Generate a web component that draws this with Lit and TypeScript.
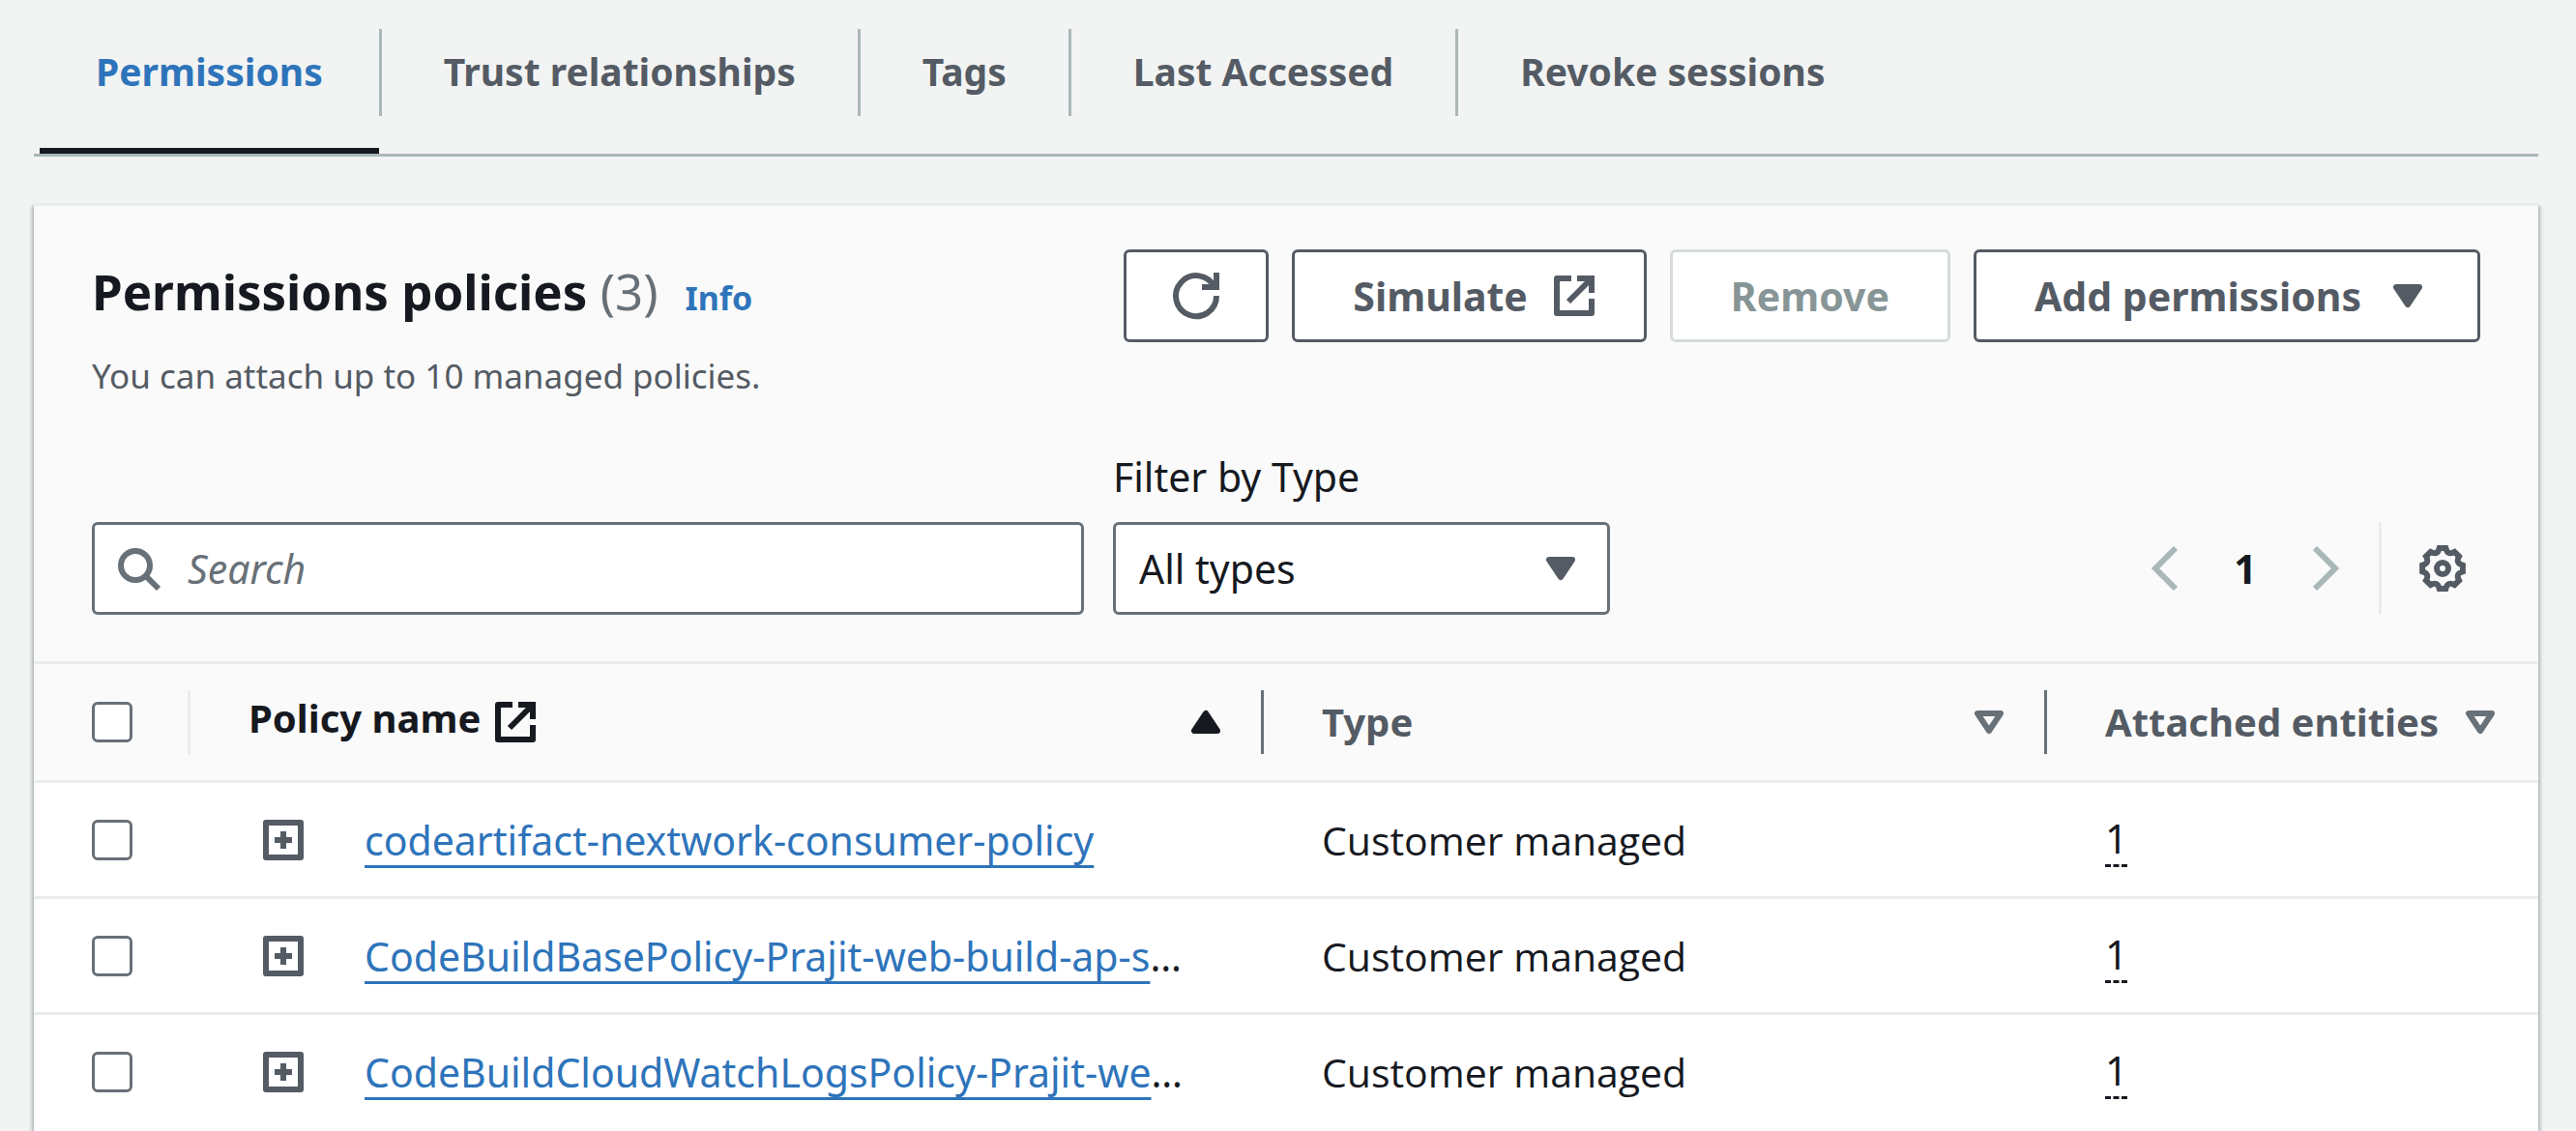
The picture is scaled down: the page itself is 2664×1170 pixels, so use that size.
import { LitElement, html, css, svg, nothing } from "lit";
import { customElement, state } from "lit/decorators.js";

interface Policy {
  name: string;
  truncated: boolean;
  type: string;
  entities: number;
}

const TABS = ["Permissions", "Trust relationships", "Tags", "Last Accessed", "Revoke sessions"];

const POLICIES: Policy[] = [
  { name: "codeartifact-nextwork-consumer-policy", truncated: false, type: "Customer managed", entities: 1 },
  { name: "CodeBuildBasePolicy-Prajit-web-build-ap-s", truncated: true, type: "Customer managed", entities: 1 },
  { name: "CodeBuildCloudWatchLogsPolicy-Prajit-we", truncated: true, type: "Customer managed", entities: 1 },
];

/* Outline of an eight-toothed gear centred on (8, 8). */
function gearPath(): string {
  const point = (deg: number, r: number) => {
    const a = ((deg - 90) * Math.PI) / 180;
    return `${(8 + r * Math.cos(a)).toFixed(2)} ${(8 + r * Math.sin(a)).toFixed(2)}`;
  };
  let d = `M${point(-9, 7.05)}`;
  for (let k = 0; k < 8; k++) {
    const base = k * 45;
    d += `L${point(base + 9, 7.05)}Q${point(base + 22.5, 4.7)} ${point(base + 36, 7.05)}`;
  }
  return d + "Z";
}

const SHAPES = {
  refresh: svg`<path d="M10 5h5V0"/><path d="M15 8a7 7 0 1 1-.7-3"/>`,
  external: svg`<path stroke-linejoin="round" d="M14 9v5H2V2h5"/><path d="M9 2h5v5M6 10l8-8"/>`,
  search: svg`<circle cx="7" cy="7" r="5"/><path d="M15 15l-4.4-4.4"/>`,
  left: svg`<path d="M11 1L4 8l7 7"/>`,
  right: svg`<path d="M5 1l7 7-7 7"/>`,
  gear: svg`<path d=${gearPath()}/><circle cx="8" cy="8" r="2"/>`,
  down: svg`<path fill="currentColor" stroke-linejoin="round" d="M4 5h8l-4 6z"/>`,
  downOutline: svg`<path stroke-linejoin="round" d="M4 5h8l-4 6z"/>`,
  up: svg`<path fill="currentColor" stroke-linejoin="round" d="M4 11h8L8 5z"/>`,
  expand: svg`<path stroke-linejoin="round" d="M2 2h12v12H2z"/><path d="M8 5v6M5 8h6"/>`,
};

const icon = (name: keyof typeof SHAPES) =>
  html`<svg class="icon" viewBox="0 0 16 16" aria-hidden="true">${SHAPES[name]}</svg>`;

@customElement("app-root")
export class AppRoot extends LitElement {
  @state() private activeTab = 0;

  static styles = css`
    :host {
      display: block;
      min-height: 100vh;
      background: #f2f3f3;
      color: #16191f;
      font-family: "Noto Sans", "Open Sans", sans-serif;
      font-size: 41px;
      line-height: 60px;
    }
    * {
      box-sizing: border-box;
    }
    button,
    input,
    select {
      margin: 0;
      padding: 0;
      border: 0;
      background: none;
      color: inherit;
      font: inherit;
    }
    button {
      display: flex;
      align-items: center;
      justify-content: center;
    }
    a {
      color: #2e74ba;
    }
    .strong {
      font-weight: 700;
    }
    .icon {
      display: block;
      flex: none;
      width: 48px;
      height: 48px;
      overflow: visible;
      fill: none;
      stroke: currentColor;
      stroke-width: 2;
    }

    .tabs {
      display: flex;
      margin: 0 39px 48px 35px;
      padding-left: 6px;
      border-bottom: 3px solid #aab7b8;
    }
    .tab {
      padding: 30px 0 33px;
      border-bottom: 6px solid transparent;
      color: #545b64;
      font-size: 39px;
    }
    .tab-label {
      display: block;
      padding: 14px 64px 16px;
      border-left: 3px solid #aab7b8;
    }
    .tab:first-child .tab-label {
      padding: 14px 58px 16px;
      border-left: 0;
    }
    .tab.active {
      border-bottom-color: #16191f;
      color: #2e74ba;
    }

    .card {
      margin: 0 39px 0 35px;
      border-top: 3px solid #eaeded;
      background: #fff;
      box-shadow:
        0 3px 3px 0 rgba(0, 28, 36, 0.3),
        3px 3px 3px 0 rgba(0, 28, 36, 0.15),
        -3px 3px 3px 0 rgba(0, 28, 36, 0.15);
    }
    .card-head {
      padding: 45px 60px 48px;
      background: #fafafa;
    }
    .title-row {
      display: flex;
      justify-content: space-between;
      align-items: flex-start;
    }
    .title {
      display: flex;
      align-items: baseline;
      padding-top: 10px;
    }
    h2 {
      margin: 0;
      font-size: 51px;
      line-height: 66px;
    }
    .count {
      color: #687078;
      font-weight: 400;
    }
    .info {
      margin-left: 28px;
      font-size: 34px;
      line-height: 60px;
      text-decoration: none;
    }
    .description {
      margin: 8px 0 47px;
      color: #545b64;
      font-size: 35px;
      line-height: 54px;
    }
    .actions {
      display: flex;
      gap: 24px;
    }
    .button {
      gap: 24px;
      height: 96px;
      padding: 0 60px;
      border: 3px solid #545b64;
      border-radius: 6px;
      background: #fff;
      color: #545b64;
    }
    .button.trailing {
      padding-right: 48px;
    }
    .button.square {
      padding: 0 48px;
    }
    .button:disabled {
      border-color: #d5dbdb;
      color: #879596;
    }

    .filters {
      display: flex;
      align-items: flex-end;
      gap: 30px;
    }
    .field {
      position: relative;
      display: flex;
      align-items: center;
      color: #687078;
    }
    .search {
      flex: 0 1 1026px;
    }
    .search .icon {
      position: absolute;
      left: 24px;
    }
    .box {
      width: 100%;
      height: 96px;
      border: 3px solid #687078;
      border-radius: 6px;
      background: #fff;
      color: #16191f;
    }
    input.box {
      padding: 0 24px 0 96px;
    }
    input.box::placeholder {
      color: #687078;
      font-style: italic;
      opacity: 1;
    }
    .type-filter {
      flex: 0 1 514px;
    }
    .type-filter label {
      display: block;
      margin-bottom: 17px;
    }
    .type-filter .field {
      color: #545b64;
    }
    .type-filter .icon {
      position: absolute;
      right: 27px;
      pointer-events: none;
    }
    select.box {
      padding: 0 96px 0 24px;
      appearance: none;
    }
    .paging {
      display: flex;
      align-items: center;
      height: 96px;
      margin-left: auto;
      padding-right: 15px;
      color: #545b64;
    }
    .paging button:disabled {
      color: #aab7b8;
    }
    .page {
      width: 114px;
      color: #16191f;
    }
    .rule {
      align-self: stretch;
      width: 3px;
      margin: 0 39px 0 33px;
      background: #eaeded;
    }

    table {
      width: 100%;
      border-collapse: separate;
      border-spacing: 0;
      table-layout: fixed;
    }
    .col-check {
      width: 162px;
    }
    .col-name {
      width: 1110px;
    }
    .col-type {
      width: 810px;
    }
    th {
      padding: 0;
      border-top: 3px solid #eaeded;
      border-bottom: 3px solid #eaeded;
      background: #fafafa;
      color: #545b64;
      font-size: 40px;
      text-align: left;
    }
    .head-cell {
      display: flex;
      align-items: center;
      height: 120px;
      padding-left: 60px;
    }
    .head-cell::after {
      content: "";
      width: 3px;
      height: 66px;
      margin-left: 33px;
      background: #687078;
    }
    th:first-child .head-cell::after {
      margin-left: auto;
      background: #eaeded;
    }
    th:last-child .head-cell::after {
      background: transparent;
    }
    .head-cell button {
      margin-left: auto;
      color: #687078;
    }
    .sorted,
    .sorted .head-cell button {
      color: #16191f;
    }
    .heading-link {
      display: flex;
      align-items: center;
      gap: 12px;
      color: inherit;
      text-decoration: none;
    }
    .heading-link span {
      padding-bottom: 8px;
    }
    td {
      height: 120px;
      padding: 0 0 0 60px;
      border-bottom: 3px solid #eaeded;
      white-space: nowrap;
    }
    tr:last-child td {
      border-bottom-color: transparent;
    }
    .type {
      font-family: "Open Sans", "Noto Sans", sans-serif;
    }
    .check {
      display: block;
      width: 42px;
      height: 42px;
      border: 3px solid #687078;
      border-radius: 6px;
      background: #fff;
      appearance: none;
    }
    .name {
      display: flex;
      align-items: center;
      gap: 60px;
      padding-left: 12px;
    }
    .name button {
      color: #545b64;
    }
    .name a {
      text-decoration: underline 3px;
      text-decoration-skip-ink: none;
      text-underline-offset: 10px;
    }
    .entities {
      border-bottom: 3px dashed #16191f;
      line-height: 54px;
    }
  `;

  render() {
    return html`
      <nav class="tabs" role="tablist">
        ${TABS.map(
          (label, i) => html`
            <button
              class="tab strong ${i === this.activeTab ? "active" : ""}"
              role="tab"
              aria-selected=${i === this.activeTab}
              @click=${() => (this.activeTab = i)}
            ><span class="tab-label">${label}</span></button>
          `,
        )}
      </nav>
      <section class="card">
        <div class="card-head">
          <div class="title-row">
            <div class="title">
              <h2>Permissions policies <span class="count">(3)</span></h2>
              <a class="info strong" href="#info">Info</a>
            </div>
            <div class="actions">
              <button class="button square" aria-label="Refresh">${icon("refresh")}</button>
              <button class="button trailing strong">Simulate ${icon("external")}</button>
              <button class="button strong" disabled>Remove</button>
              <button class="button trailing strong">Add permissions ${icon("down")}</button>
            </div>
          </div>
          <p class="description">You can attach up to 10 managed policies.</p>
          <div class="filters">
            <div class="field search">
              ${icon("search")}
              <input class="box" type="text" placeholder="Search" aria-label="Search" />
            </div>
            <div class="type-filter">
              <label for="type">Filter by Type</label>
              <div class="field">
                <select class="box" id="type"><option>All types</option></select>
                ${icon("down")}
              </div>
            </div>
            <div class="paging">
              <button disabled aria-label="Previous page">${icon("left")}</button>
              <button class="page strong">1</button>
              <button disabled aria-label="Next page">${icon("right")}</button>
              <span class="rule"></span>
              <button aria-label="Preferences">${icon("gear")}</button>
            </div>
          </div>
        </div>
        <table>
          <colgroup>
            <col class="col-check" />
            <col class="col-name" />
            <col class="col-type" />
            <col />
          </colgroup>
          <thead>
            <tr>
              <th scope="col">
                <div class="head-cell"><input class="check" type="checkbox" aria-label="Select all" /></div>
              </th>
              <th scope="col" class="strong sorted" aria-sort="ascending">
                <div class="head-cell">
                  <a class="heading-link" href="#policies"><span>Policy name</span>${icon("external")}</a>
                  <button aria-label="Sort by policy name">${icon("up")}</button>
                </div>
              </th>
              <th scope="col" class="strong">
                <div class="head-cell">
                  Type <button aria-label="Sort by type">${icon("downOutline")}</button>
                </div>
              </th>
              <th scope="col" class="strong">
                <div class="head-cell">
                  Attached entities
                  <button aria-label="Sort by attached entities">${icon("downOutline")}</button>
                </div>
              </th>
            </tr>
          </thead>
          <tbody>
            ${POLICIES.map(
              (p) => html`
                <tr>
                  <td><input class="check" type="checkbox" aria-label="Select ${p.name}" /></td>
                  <td>
                    <div class="name">
                      <button aria-label="Expand ${p.name}">${icon("expand")}</button>
                      <span><a href="#policy">${p.name}</a>${p.truncated ? "…" : nothing}</span>
                    </div>
                  </td>
                  <td class="type">${p.type}</td>
                  <td><button class="entities">${p.entities}</button></td>
                </tr>
              `,
            )}
          </tbody>
        </table>
      </section>
    `;
  }
}
